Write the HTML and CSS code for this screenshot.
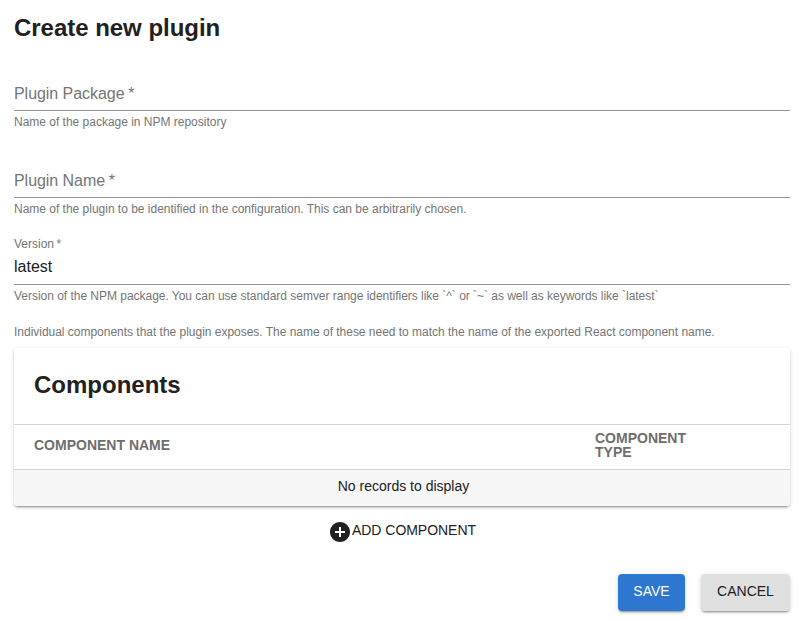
FILE: index.html
```html
<!DOCTYPE html>
<html lang="en">
<head>
<meta charset="utf-8">
<title>Create new plugin</title>
<link rel="stylesheet" href="styles.css">
</head>
<body>
<main class="page">
  <h1 class="title">Create new plugin</h1>
  <form class="form">
    <div class="field">
      <div class="control"><span class="placeholder">Plugin Package<span class="star"> *</span></span></div>
      <p class="helper">Name of the package in NPM repository</p>
    </div>
    <div class="field">
      <div class="control"><span class="placeholder">Plugin Name<span class="star"> *</span></span></div>
      <p class="helper">Name of the plugin to be identified in the configuration. This can be arbitrarily chosen.</p>
    </div>
    <div class="field">
      <div class="control"><span class="label">Version<span class="star"> *</span></span><span class="value">latest</span></div>
      <p class="helper version-help">Version of the NPM package. You can use standard semver range identifiers like `^` or `~` as well as keywords like `latest`</p>
    </div>
    <p class="helper intro">Individual components that the plugin exposes. The name of these need to match the name of the exported React component name.</p>
    <section class="card">
      <h2 class="card-title">Components</h2>
      <div class="row head"><span>COMPONENT NAME</span><span class="type">COMPONENT TYPE</span></div>
      <div class="row empty">No records to display</div>
    </section>
    <div class="add">
      <svg class="icon" viewBox="0 0 24 24"><path d="M12 2C6.48 2 2 6.48 2 12s4.48 10 10 10 10-4.48 10-10S17.52 2 12 2zm5 11h-4v4h-2v-4H7v-2h4V7h2v4h4v2z"/></svg>
      <span class="add-text">ADD COMPONENT</span>
    </div>
    <div class="actions">
      <button type="button" class="btn primary">SAVE</button>
      <button type="button" class="btn">CANCEL</button>
    </div>
  </form>
</main>
</body>
</html>
```
FILE: styles.css
```css
* { box-sizing: border-box; }
body { margin: 0; background: #fff; color: #212121; font-family: "Nimbus Sans", "Liberation Sans", Arial, sans-serif; font-size: 14px; }
h1, h2, p { margin: 0; }
.page { padding: 12px 12px 10px 14px; }
.title, .card-title { font-size: 24px; line-height: 32px; font-weight: 700; }
.title { letter-spacing: -.03px; }
.field { height: 71px; margin-bottom: 16px; }
.form { padding-top: 20px; }
.control { height: 47px; border-bottom: 1px solid #949494; display: flex; flex-direction: column; justify-content: flex-end; }
.placeholder { font-size: 16px; line-height: 19px; padding-bottom: 7px; color: #757575; letter-spacing: -.05px; }
.star { letter-spacing: -.8px; }
.label { font-size: 12px; line-height: 14px; color: #757575; }
.value { font-size: 16px; line-height: 19px; padding: 6px 0 8px; color: #212121; }
.helper { font-size: 12px; line-height: 20px; margin-top: 1px; color: #757575; letter-spacing: -.01px; }
.version-help { letter-spacing: -.025px; }
.intro { margin-top: -3px; letter-spacing: -.018px; }
.card { margin-top: 6px; border-radius: 4px; overflow: hidden; box-shadow: 0 3px 1px -2px rgba(0,0,0,.2), 0 2px 2px rgba(0,0,0,.14), 0 1px 5px rgba(0,0,0,.12); }
.card-title { padding: 21px 20px 23px; }
.row { display: grid; align-items: center; }
.head { grid-template-columns: 561px 135px; height: 46px; padding: 0 0 4px 20px; border: solid #d3d3d3; border-width: 1px 0; font-weight: 700; line-height: 14px; color: #6e6e6e; }
.type { width: 110px; }
.empty { justify-content: center; height: 36px; background: #f7f7f7; padding: 0 0 4px 3px; }
.add { display: flex; justify-content: center; align-items: center; height: 24px; margin-top: 14px; }
.add-text { padding-bottom: 4px; letter-spacing: -.03px; }
.icon { width: 24px; height: 24px; fill: #212121; }
.actions { display: flex; justify-content: flex-end; gap: 16px; margin-top: 30px; }
.btn { width: 89px; height: 37px; border: 0; border-radius: 4px; padding: 0 0 3px; font: inherit; color: #212121; background: #e0e0e0; box-shadow: 0 3px 1px -2px rgba(0,0,0,.2), 0 2px 2px rgba(0,0,0,.14), 0 1px 5px rgba(0,0,0,.12); }
.primary { width: 67px; background: #2e77d0; color: #fff; }
```
